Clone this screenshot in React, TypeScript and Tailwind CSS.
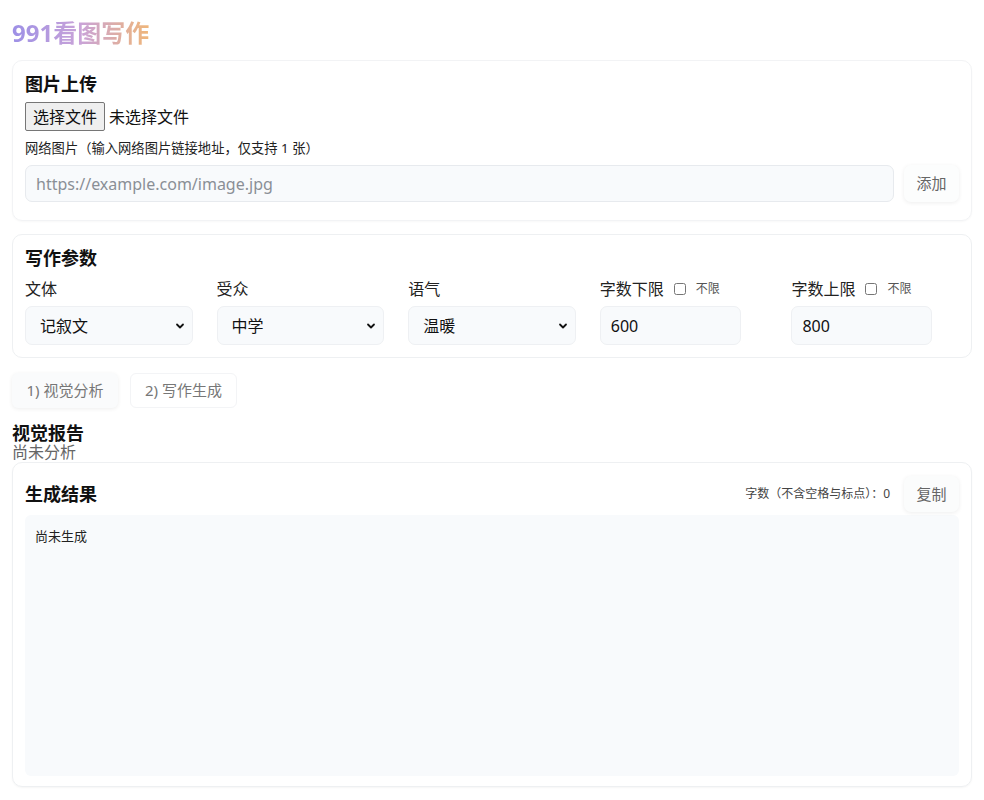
import { useState } from 'react'

const FONT = { fontFamily: '"Noto Sans", "Noto Sans CJK SC", sans-serif' }

function Chevron() {
  return (
    <svg
      className="pointer-events-none absolute right-[8px] top-1/2 -translate-y-1/2"
      width="10"
      height="10"
      viewBox="0 0 10 10"
    >
      <path d="M2 3.5 L5 6.5 L8 3.5" fill="none" stroke="#111" strokeWidth="1.8" strokeLinecap="round" strokeLinejoin="round" />
    </svg>
  )
}

function SelectField({ label, value, options }: { label: string; value: string; options: string[] }) {
  const [v, setV] = useState(value)
  return (
    <div className="flex flex-col">
      <div className="h-[24px] text-[16px] leading-[24px] text-[#222] mb-[5px]">{label}</div>
      <div className="relative">
        <select
          value={v}
          onChange={e => setV(e.target.value)}
          className="appearance-none w-full h-[39px] rounded-[7px] border border-[#eef0f3] bg-[#f8fafc] pl-[14px] pr-[24px] text-[16px] text-[#111] outline-none"
          style={FONT}
        >
          {options.map(o => (
            <option key={o}>{o}</option>
          ))}
        </select>
        <Chevron />
      </div>
    </div>
  )
}

function NumberField({ label, value }: { label: string; value: string }) {
  return (
    <div className="flex flex-col">
      <div className="h-[24px] mb-[5px] flex items-center text-[16px] leading-[24px] text-[#222]">
        <span>{label}</span>
        <input type="checkbox" className="ml-[10px] w-[12px] h-[12px]" />
        <span className="ml-[10px] text-[12px] text-[#555]">不限</span>
      </div>
      <input
        defaultValue={value}
        className="w-[141px] h-[39px] rounded-[7px] border border-[#eef0f3] bg-[#f8fafc] px-[10px] text-[16px] text-[#111] outline-none"
        style={FONT}
      />
    </div>
  )
}

export default function App() {
  const [url, setUrl] = useState('')
  return (
    <div className="min-h-[800px] bg-white px-[12px] pt-[16px] text-[#111]" style={FONT}>
      <h1
        className="text-[24px] font-bold leading-[34px] bg-clip-text text-transparent w-fit"
        style={{ backgroundImage: 'linear-gradient(90deg, #9d90e6 0%, #c9a3d8 50%, #efb67a 100%)' }}
      >
        991看图写作
      </h1>

      {/* 图片上传 */}
      <section className="mt-[10px] rounded-[10px] border border-[#f2f3f5] px-[12px] pt-[10px] pb-[18px] shadow-[0_1px_2px_rgba(0,0,0,0.03)]">
        <h2 className="text-[18px] font-bold leading-[26px] text-[#111]">图片上传</h2>
        <div className="mt-[5px] flex items-center">
          <button className="h-[29px] rounded-[2px] border border-[#767676] bg-[#efefef] px-[7px] text-[16px] leading-[20px] text-[#111]">
            选择文件
          </button>
          <span className="ml-[4px] text-[16px] text-[#111]">未选择文件</span>
        </div>
        <div className="mt-[7px] text-[13.3px] leading-[20px] text-[#222]">网络图片（输入网络图片链接地址，仅支持 1 张）</div>
        <div className="mt-[7px] flex items-center gap-[10px]">
          <input
            value={url}
            onChange={e => setUrl(e.target.value)}
            placeholder="https://example.com/image.jpg"
            className="flex-1 h-[37px] rounded-[7px] border border-[#e7eaee] bg-[#f8fafc] px-[10px] text-[16px] text-[#111] placeholder:text-[#8a8f96] outline-none"
            style={FONT}
          />
          <button className="h-[37px] w-[55px] rounded-[7px] bg-[#fcfdfd] text-[15px] text-[#666] shadow-[0_1px_4px_rgba(0,0,0,0.07)]">
            添加
          </button>
        </div>
      </section>

      {/* 写作参数 */}
      <section className="mt-[13px] rounded-[10px] border border-[#eef0f2] px-[12px] pt-[10px] pb-[12px]">
        <h2 className="text-[18px] font-bold leading-[26px] text-[#111]">写作参数</h2>
        <div className="mt-[6px] grid grid-cols-5 gap-x-[24px]">
          <SelectField label="文体" value="记叙文" options={['记叙文', '说明文', '议论文', '散文']} />
          <SelectField label="受众" value="中学" options={['小学', '中学', '大学']} />
          <SelectField label="语气" value="温暖" options={['温暖', '活泼', '严肃']} />
          <NumberField label="字数下限" value="600" />
          <NumberField label="字数上限" value="800" />
        </div>
      </section>

      {/* 步骤按钮 */}
      <div className="mt-[15px] flex gap-[12px]">
        <button className="h-[35px] w-[106px] rounded-[6px] bg-[#fafbfc] text-[15px] font-normal text-[#777] shadow-[0_1px_4px_rgba(0,0,0,0.07)]">
          1) 视觉分析
        </button>
        <button className="h-[35px] w-[107px] rounded-[6px] bg-white border border-[#f3f4f6] text-[15px] font-normal text-[#777]">
          2) 写作生成
        </button>
      </div>

      {/* 视觉报告 */}
      <div className="mt-[15px]">
        <h2 className="text-[18px] font-bold leading-[20px] text-[#111]">视觉报告</h2>
        <div className="text-[16px] leading-[19px] text-[#666]">尚未分析</div>
      </div>

      {/* 生成结果 */}
      <section className="rounded-[10px] border border-[#eef0f2] px-[12px] pt-[13px] pb-[10px] shadow-[0_1px_2px_rgba(0,0,0,0.04)]">
        <div className="flex items-center justify-between">
          <h2 className="text-[18px] font-bold leading-[32px] text-[#111]">生成结果</h2>
          <div className="flex items-center gap-[14px]">
            <span className="text-[12px] text-[#444]">字数（不含空格与标点）：0</span>
            <button className="h-[36px] w-[55px] rounded-[7px] bg-[#fbfcfc] text-[15px] text-[#666] shadow-[0_1px_4px_rgba(0,0,0,0.07)]">
              复制
            </button>
          </div>
        </div>
        <div className="mt-[3px] h-[261px] rounded-[6px] bg-[#f8fafc] px-[10px] py-[12px] text-[13px] text-[#222]">
          尚未生成
        </div>
      </section>
    </div>
  )
}
